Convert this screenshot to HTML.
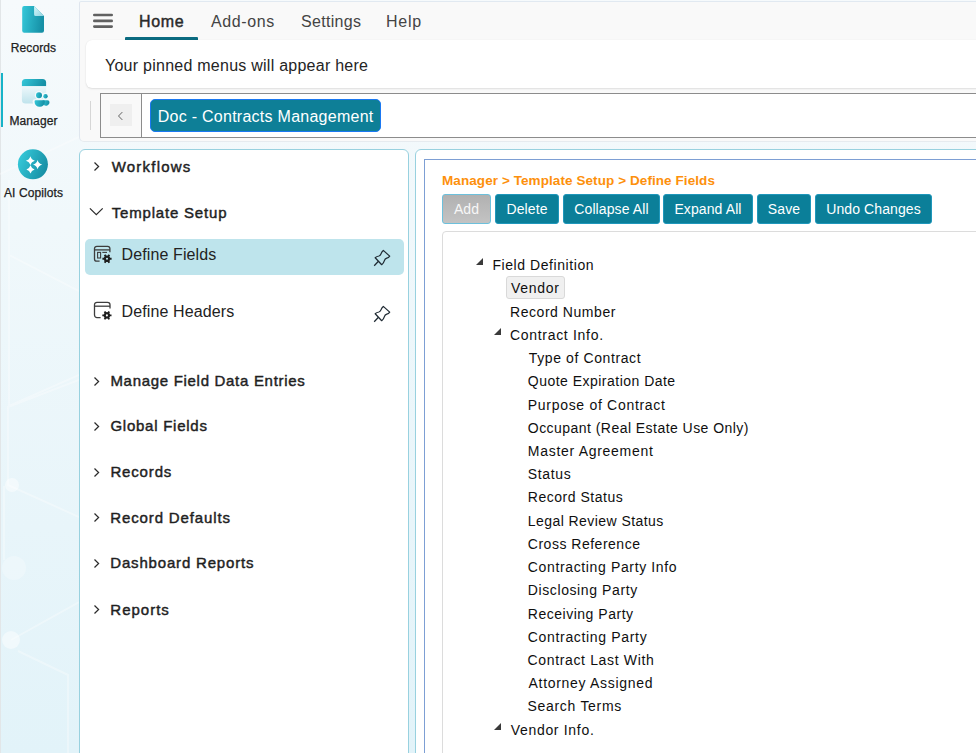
<!DOCTYPE html>
<html><head><meta charset="utf-8">
<style>
*{box-sizing:border-box;margin:0;padding:0}
html,body{width:976px;height:753px;overflow:hidden}
body{position:relative;font-family:"Liberation Sans",sans-serif;background:linear-gradient(180deg,#f6fafc 0%,#f0f8fb 30%,#e8f5fa 70%,#e2f3f9 100%);color:#222}
.abs{position:absolute}
#side{left:0;top:0;width:79px;height:753px;border-left:1px solid #e2e6e8}
.sl{position:absolute;left:0;width:67px;text-align:center;font-size:12px;color:#202020;-webkit-text-stroke:0.25px #202020;letter-spacing:0.1px}
#hdr{left:79px;top:1px;width:920px;height:141px;background:#f9f9f9;border-left:1px solid #dfe6ee;border-top:1px solid #e1e9f1;border-bottom:1px solid #e6ebef;border-radius:2px 0 0 5px}
.tab{position:absolute;top:12.7px;font-size:16px;color:#444;letter-spacing:0.6px}
#pin{left:86px;top:40px;width:920px;height:48px;background:#fff;border-radius:6px;box-shadow:0 1px 2px rgba(0,0,0,.10),0 0 1px rgba(0,0,0,.08)}
#bc{left:100px;top:93px;width:920px;height:45px;border:1px solid #8c8c8c;background:#fff}
#lp{left:79px;top:149px;width:329.6px;height:640px;background:#fff;border:1.5px solid #98d1df;border-radius:6px}
#rp{left:415px;top:149px;width:620px;height:640px;background:#fff;border:1.5px solid #98d1df;border-radius:6px}
#inner{left:424px;top:159px;width:620px;height:640px;background:#fff;border:1px solid #7d9fd4}
.btn{position:absolute;top:194px;height:29.5px;background:#0b7f99;color:#fff;font-size:14px;border:1px solid #1f97bb;border-radius:3px;text-align:center;line-height:28px;letter-spacing:0.1px}
.nav{position:absolute;left:111px;font-size:15px;font-weight:normal;-webkit-text-stroke:0.45px #1f1f1f;color:#1f1f1f}
.chev{position:absolute;left:90px;width:14px;height:10px;overflow:visible}
.ti{position:absolute;font-size:14px;color:#0f0f0f;white-space:nowrap;letter-spacing:0.7px}
.tri{position:absolute;width:0;height:0;border-left:7px solid transparent;border-bottom:7px solid #3a3a3a}
.nl{position:absolute;left:121.5px;font-size:16px;color:#222;letter-spacing:0.12px}
</style></head><body>
<div id="side" class="abs"></div>
<svg class="abs" style="left:0;top:0" width="79" height="753" viewBox="0 0 79 753">
 <g stroke="#ffffff" stroke-width="2" fill="none" opacity="0.33">
  <path d="M0 174 L79 137"/>
  <path d="M9 180 V255 L79 291"/>
  <path d="M9 255 V406 L79 375"/>
  <path d="M79 380 L8 407 V485 L79 517"/>
  <path d="M11 640 L79 602"/>
  <path d="M18 651 L68 675 V753"/>
  <path d="M4 486 V560"/>
 </g>
 <g fill="#ffffff" opacity="0.45">
  <circle cx="12" cy="485" r="7"/>
  <circle cx="11" cy="640" r="9"/>
 </g>
 <circle cx="14" cy="568" r="12" fill="#ffffff" opacity="0.25"/>
</svg>

<!-- sidebar icons -->
<svg class="abs" style="left:0;top:0" width="79" height="210" viewBox="0 0 79 210">
  <defs>
    <linearGradient id="tg" x1="0" y1="0" x2="1" y2="0.15">
      <stop offset="0" stop-color="#34c8d9"/><stop offset="1" stop-color="#1690a6"/>
    </linearGradient>
    <linearGradient id="fold" x1="0" y1="0" x2="1" y2="1">
      <stop offset="0" stop-color="#d6f8fc"/><stop offset="1" stop-color="#8fd3e0"/>
    </linearGradient>
    <linearGradient id="cg" x1="0" y1="0.2" x2="1" y2="0.6">
      <stop offset="0" stop-color="#36cbdb"/><stop offset="1" stop-color="#178ea4"/>
    </linearGradient>
    <linearGradient id="mg" x1="0" y1="0" x2="0" y2="1">
      <stop offset="0" stop-color="#eef8fb"/><stop offset="1" stop-color="#bfe3ec"/>
    </linearGradient>
  </defs>
  <!-- records doc -->
  <path d="M24.2 6.1 H34.1 L44 15.9 V30.7 A2 2 0 0 1 42 32.7 H24.2 A2 2 0 0 1 22.2 30.7 V8.1 A2 2 0 0 1 24.2 6.1 Z" fill="url(#tg)"/>
  <path d="M34.1 6.1 L44 15.9 H35.6 A1.5 1.5 0 0 1 34.1 14.4 Z" fill="url(#fold)"/>
  <!-- manager -->
  <path d="M25.5 79 H42.5 A3.6 3.6 0 0 1 46.1 82.6 V86.2 H21.9 V82.6 A3.6 3.6 0 0 1 25.5 79 Z" fill="url(#tg)"/>
  <path d="M21.9 86.2 H46.1 V100 A3.6 3.6 0 0 1 42.5 103.6 H25.5 A3.6 3.6 0 0 1 21.9 100 Z" fill="url(#mg)"/>
  <circle cx="39" cy="95.3" r="4.2" fill="#f4fafc"/>
  <circle cx="45.5" cy="96.2" r="3.4" fill="#f4fafc"/>
  <path d="M32.6 101.2 a2 2 0 0 1 2 -2 h10.6 a2 2 0 0 1 2 2 v0.6 a5.6 5.6 0 0 1 -7.3 5.4 a5.6 5.6 0 0 1 -7.3 -5.4 z" fill="#f4fafc"/>
  <circle cx="39" cy="95.3" r="3" fill="url(#tg)"/>
  <circle cx="45.5" cy="96.2" r="2.2" fill="url(#tg)"/>
  <path d="M42.5 100.2 h5 a2 2 0 0 1 2 2 a3.4 3.4 0 0 1 -6 2.4 z" fill="url(#tg)"/>
  <path d="M35.6 100.2 h8.2 a1 1 0 0 1 1 1 v0.8 a4.8 4.8 0 0 1 -5.1 4.8 a4.8 4.8 0 0 1 -5.1 -4.8 v-0.8 a1 1 0 0 1 1 -1 z" fill="url(#tg)"/>
  <!-- active bar -->
  <rect x="1" y="73" width="2" height="54" fill="#17b3c8"/>
  <!-- copilot -->
  <circle cx="32.9" cy="164.3" r="15" fill="url(#cg)"/>
  <path d="M30.40 156.30 Q31.39 159.81 34.90 160.80 Q31.39 161.79 30.40 165.30 Q29.41 161.79 25.90 160.80 Q29.41 159.81 30.40 156.30 Z" fill="#fff"/>
  <path d="M37.60 160.00 Q38.61 163.59 42.20 164.60 Q38.61 165.61 37.60 169.20 Q36.59 165.61 33.00 164.60 Q36.59 163.59 37.60 160.00 Z" fill="#fff"/>
  <path d="M30.50 165.30 Q31.40 168.50 34.60 169.40 Q31.40 170.30 30.50 173.50 Q29.60 170.30 26.40 169.40 Q29.60 168.50 30.50 165.30 Z" fill="#fff"/>
</svg>
<div class="sl" style="top:41px">Records</div>
<div class="sl" style="top:114px">Manager</div>
<div class="sl" style="top:186px">AI Copilots</div>

<!-- header -->
<div id="hdr" class="abs"></div>
<svg class="abs" style="left:93px;top:13px" width="20" height="16" viewBox="0 0 20 16">
  <g stroke="#616161" stroke-width="2.6" stroke-linecap="round"><line x1="1.3" y1="2" x2="18.7" y2="2"/><line x1="1.3" y1="7.9" x2="18.7" y2="7.9"/><line x1="1.3" y1="13.6" x2="18.7" y2="13.6"/></g>
</svg>
<div class="tab" style="left:139px;color:#2a2a2a;-webkit-text-stroke:0.45px #2a2a2a;letter-spacing:0.667px">Home</div>
<div class="abs" style="left:125px;top:37px;width:73px;height:3px;background:#0b6b81;border-radius:1px 1px 0 0"></div>
<div class="tab" style="left:211px">Add-ons</div>
<div class="tab" style="left:301px;letter-spacing:0.3px">Settings</div>
<div class="tab" style="left:386px;letter-spacing:0.75px">Help</div>

<div id="pin" class="abs"></div>
<div class="abs" style="left:105px;top:57px;font-size:16px;color:#242424;letter-spacing:0.25px">Your pinned menus will appear here</div>

<div class="abs" style="left:90px;top:101px;width:1px;height:29px;background:#d6d6d6"></div>
<div id="bc" class="abs"></div>
<div class="abs" style="left:101px;top:94px;width:41px;height:43px;background:#f9f9f9;border-right:1px solid #8c8c8c"></div>
<div class="abs" style="left:110px;top:104px;width:22px;height:22px;background:#efefef"></div>
<svg class="abs" style="left:116px;top:111px" width="10" height="10" viewBox="0 0 10 10"><polyline points="6.3,1.1 2.5,5 6.3,8.9" fill="none" stroke="#5a5a5a" stroke-width="0.95"/></svg>
<div class="abs" style="left:150px;top:99px;width:231px;height:33px;background:#0e7f97;border:1.5px solid #1a78f2;border-radius:5px;color:#fff;font-size:16px;line-height:33px;padding-left:6.8px;letter-spacing:0.26px;overflow:hidden">Doc - Contracts Management</div>

<!-- panels -->
<div id="lp" class="abs"></div>
<div id="rp" class="abs"></div>
<div id="inner" class="abs"></div>

<!-- left nav -->
<svg class="chev" style="top:161px" viewBox="0 0 14 10"><polyline points="4.5,1.5 8.6,5.5 4.5,9.5" fill="none" stroke="#2b2b2b" stroke-width="1.25"/></svg>
<div class="nav" style="left:111.7px;top:157.9px;letter-spacing:1.213px">Workflows</div>
<svg class="chev" style="top:207px" viewBox="0 0 14 10"><polyline points="-0.1,1.4 6.3,7.6 12.7,1.4" fill="none" stroke="#2b2b2b" stroke-width="1.25"/></svg>
<div class="nav" style="left:111.7px;top:203.8px;letter-spacing:0.815px">Template Setup</div>

<div class="abs" style="left:85px;top:239px;width:319px;height:36px;background:#bee4ec;border-radius:5px"></div>
<svg class="abs" style="left:92px;top:244px" width="22" height="22" viewBox="0 0 22 22">
  <path d="M7.6 17.2 H4.8 A2.3 2.3 0 0 1 2.5 14.9 V4.6 A2.3 2.3 0 0 1 4.8 2.3 H15.6 A2.3 2.3 0 0 1 17.9 4.6 V8.2" fill="none" stroke="#3d3d3d" stroke-width="1.3"/>
  <line x1="2.5" y1="5.9" x2="17.9" y2="5.9" stroke="#3d3d3d" stroke-width="1.3"/>
  <rect x="5.6" y="8.4" width="3" height="5.6" fill="none" stroke="#3d3d3d" stroke-width="1.1"/>
  <line x1="10.3" y1="8.4" x2="15" y2="8.4" stroke="#3d3d3d" stroke-width="1.1"/>
  <g transform="translate(15,14.8)"><path d="M2.90 -1.57 L3.16 -0.94 L4.60 -0.94 L4.60 0.94 L3.16 0.94 L2.90 1.57 L2.81 1.72 L2.39 2.27 L3.12 3.52 L1.49 4.46 L0.77 3.21 L0.09 3.30 L-0.09 3.30 L-0.77 3.21 L-1.49 4.46 L-3.12 3.52 L-2.39 2.27 L-2.81 1.72 L-2.90 1.57 L-3.16 0.94 L-4.60 0.94 L-4.60 -0.94 L-3.16 -0.94 L-2.90 -1.57 L-2.81 -1.72 L-2.39 -2.27 L-3.12 -3.52 L-1.49 -4.46 L-0.77 -3.21 L-0.09 -3.30 L0.09 -3.30 L0.77 -3.21 L1.49 -4.46 L3.12 -3.52 L2.39 -2.27 L2.81 -1.72 Z" fill="#1e1e1e"/><circle r="1.05" fill="#bee4ec"/></g>
</svg>
<div class="nl" style="top:246px">Define Fields</div>
<svg class="abs" style="left:366px;top:242px" width="30" height="30" viewBox="0 0 30 30"><path d="M9.2 15.7 Q10.6 14.4 12.9 14 Q14.4 13.6 15.1 11.6 Q15.8 9.6 17.3 8.4 L23.7 14.1 Q22.6 15.6 20.8 16.2 Q18.9 16.8 18.4 18.6 Q17.6 21.3 15.7 22.7 Z M12.2 19.5 L8.2 23.7" fill="none" stroke="#1f2a33" stroke-width="1.25" stroke-linejoin="round"/></svg>

<svg class="abs" style="left:92px;top:300px" width="22" height="22" viewBox="0 0 22 22">
  <path d="M8.6 17.6 H5 A2.5 2.5 0 0 1 2.5 15.1 V4.8 A2.5 2.5 0 0 1 5 2.3 H15.5 A2.5 2.5 0 0 1 18 4.8 V8.6" fill="none" stroke="#3d3d3d" stroke-width="1.3"/>
  <line x1="2.5" y1="6.2" x2="18" y2="6.2" stroke="#3d3d3d" stroke-width="1.3"/>
  <g transform="translate(14.9,15.4)"><path d="M2.90 -1.57 L3.16 -0.94 L4.60 -0.94 L4.60 0.94 L3.16 0.94 L2.90 1.57 L2.81 1.72 L2.39 2.27 L3.12 3.52 L1.49 4.46 L0.77 3.21 L0.09 3.30 L-0.09 3.30 L-0.77 3.21 L-1.49 4.46 L-3.12 3.52 L-2.39 2.27 L-2.81 1.72 L-2.90 1.57 L-3.16 0.94 L-4.60 0.94 L-4.60 -0.94 L-3.16 -0.94 L-2.90 -1.57 L-2.81 -1.72 L-2.39 -2.27 L-3.12 -3.52 L-1.49 -4.46 L-0.77 -3.21 L-0.09 -3.30 L0.09 -3.30 L0.77 -3.21 L1.49 -4.46 L3.12 -3.52 L2.39 -2.27 L2.81 -1.72 Z" fill="#1e1e1e"/><circle r="1.05" fill="#fff"/></g>
</svg>
<div class="nl" style="top:303px">Define Headers</div>
<svg class="abs" style="left:366px;top:298px" width="30" height="30" viewBox="0 0 30 30"><path d="M9.2 15.7 Q10.6 14.4 12.9 14 Q14.4 13.6 15.1 11.6 Q15.8 9.6 17.3 8.4 L23.7 14.1 Q22.6 15.6 20.8 16.2 Q18.9 16.8 18.4 18.6 Q17.6 21.3 15.7 22.7 Z M12.2 19.5 L8.2 23.7" fill="none" stroke="#1f2a33" stroke-width="1.25" stroke-linejoin="round"/></svg>

<svg class="chev" style="top:376px" viewBox="0 0 14 10"><polyline points="4.5,1.5 8.6,5.5 4.5,9.5" fill="none" stroke="#2b2b2b" stroke-width="1.25"/></svg>
<div class="nav" style="left:110.4px;top:372.0px;letter-spacing:0.7px">Manage Field Data Entries</div>
<svg class="chev" style="top:421px" viewBox="0 0 14 10"><polyline points="4.5,1.5 8.6,5.5 4.5,9.5" fill="none" stroke="#2b2b2b" stroke-width="1.25"/></svg>
<div class="nav" style="left:110.4px;top:416.8px;letter-spacing:0.75px">Global Fields</div>
<svg class="chev" style="top:467px" viewBox="0 0 14 10"><polyline points="4.5,1.5 8.6,5.5 4.5,9.5" fill="none" stroke="#2b2b2b" stroke-width="1.25"/></svg>
<div class="nav" style="left:110.4px;top:462.7px;letter-spacing:0.85px">Records</div>
<svg class="chev" style="top:512px" viewBox="0 0 14 10"><polyline points="4.5,1.5 8.6,5.5 4.5,9.5" fill="none" stroke="#2b2b2b" stroke-width="1.25"/></svg>
<div class="nav" style="left:110.3px;top:508.5px;letter-spacing:0.864px">Record Defaults</div>
<svg class="chev" style="top:558px" viewBox="0 0 14 10"><polyline points="4.5,1.5 8.6,5.5 4.5,9.5" fill="none" stroke="#2b2b2b" stroke-width="1.25"/></svg>
<div class="nav" style="left:110.3px;top:554.4px;letter-spacing:0.819px">Dashboard Reports</div>
<svg class="chev" style="top:604px" viewBox="0 0 14 10"><polyline points="4.5,1.5 8.6,5.5 4.5,9.5" fill="none" stroke="#2b2b2b" stroke-width="1.25"/></svg>
<div class="nav" style="left:110.3px;top:600.5px;letter-spacing:1.0px">Reports</div>

<!-- right content -->
<div class="abs" style="left:442px;top:172.5px;font-size:13.5px;font-weight:bold;color:#fd900c;letter-spacing:0.08px">Manager &gt; Template Setup &gt; Define Fields</div>
<div class="btn" style="left:442px;width:49px;background:linear-gradient(#b1b1b1,#c3c3c3);border-color:#6cc0dc;color:#f7f7f7">Add</div>
<div class="btn" style="left:495px;width:64px">Delete</div>
<div class="btn" style="left:563px;width:97px">Collapse All</div>
<div class="btn" style="left:663px;width:90px">Expand All</div>
<div class="btn" style="left:757px;width:54px">Save</div>
<div class="btn" style="left:815px;width:117px">Undo Changes</div>
<div class="abs" style="left:442px;top:231px;width:620px;height:620px;border:1px solid #dcdcdc;border-radius:4px"></div>

<div id="tree">
<div class="tri" style="left:476.2px;top:258.20px"></div>
<div class="ti" style="left:492.4px;top:257.20px;letter-spacing:0.573px">Field Definition</div>
<div class="abs" style="left:506px;top:276.2px;width:59px;height:22.5px;background:#f0f0f0;border:1px solid #d9d9d9;border-radius:3px"></div>
<div class="ti" style="left:511.0px;top:280.42px;letter-spacing:0.7px">Vendor</div>
<div class="ti" style="left:510.0px;top:303.64px;letter-spacing:0.55px">Record Number</div>
<div class="tri" style="left:494.0px;top:327.86px"></div>
<div class="ti" style="left:510.0px;top:326.86px;letter-spacing:0.692px">Contract Info.</div>
<div class="ti" style="left:528.8px;top:350.08px;letter-spacing:0.607px">Type of Contract</div>
<div class="ti" style="left:527.8px;top:373.30px;letter-spacing:0.48px">Quote Expiration Date</div>
<div class="ti" style="left:527.8px;top:396.52px;letter-spacing:0.7px">Purpose of Contract</div>
<div class="ti" style="left:527.8px;top:419.74px;letter-spacing:0.457px">Occupant (Real Estate Use Only)</div>
<div class="ti" style="left:527.8px;top:442.96px;letter-spacing:0.713px">Master Agreement</div>
<div class="ti" style="left:527.8px;top:466.18px;letter-spacing:0.66px">Status</div>
<div class="ti" style="left:527.8px;top:489.40px;letter-spacing:0.517px">Record Status</div>
<div class="ti" style="left:527.8px;top:512.62px;letter-spacing:0.439px">Legal Review Status</div>
<div class="ti" style="left:527.8px;top:535.84px;letter-spacing:0.507px">Cross Reference</div>
<div class="ti" style="left:527.8px;top:559.06px;letter-spacing:0.638px">Contracting Party Info</div>
<div class="ti" style="left:527.8px;top:582.28px;letter-spacing:0.6px">Disclosing Party</div>
<div class="ti" style="left:527.8px;top:605.50px;letter-spacing:0.514px">Receiving Party</div>
<div class="ti" style="left:527.8px;top:628.72px;letter-spacing:0.669px">Contracting Party</div>
<div class="ti" style="left:527.5px;top:651.94px;letter-spacing:0.653px">Contract Last With</div>
<div class="ti" style="left:528.5px;top:675.16px;letter-spacing:0.7px">Attorney Assigned</div>
<div class="ti" style="left:527.5px;top:698.38px;letter-spacing:0.7px">Search Terms</div>
<div class="tri" style="left:494.0px;top:722.60px"></div>
<div class="ti" style="left:510.7px;top:721.60px;letter-spacing:0.691px">Vendor Info.</div>
</div>
</body></html>
